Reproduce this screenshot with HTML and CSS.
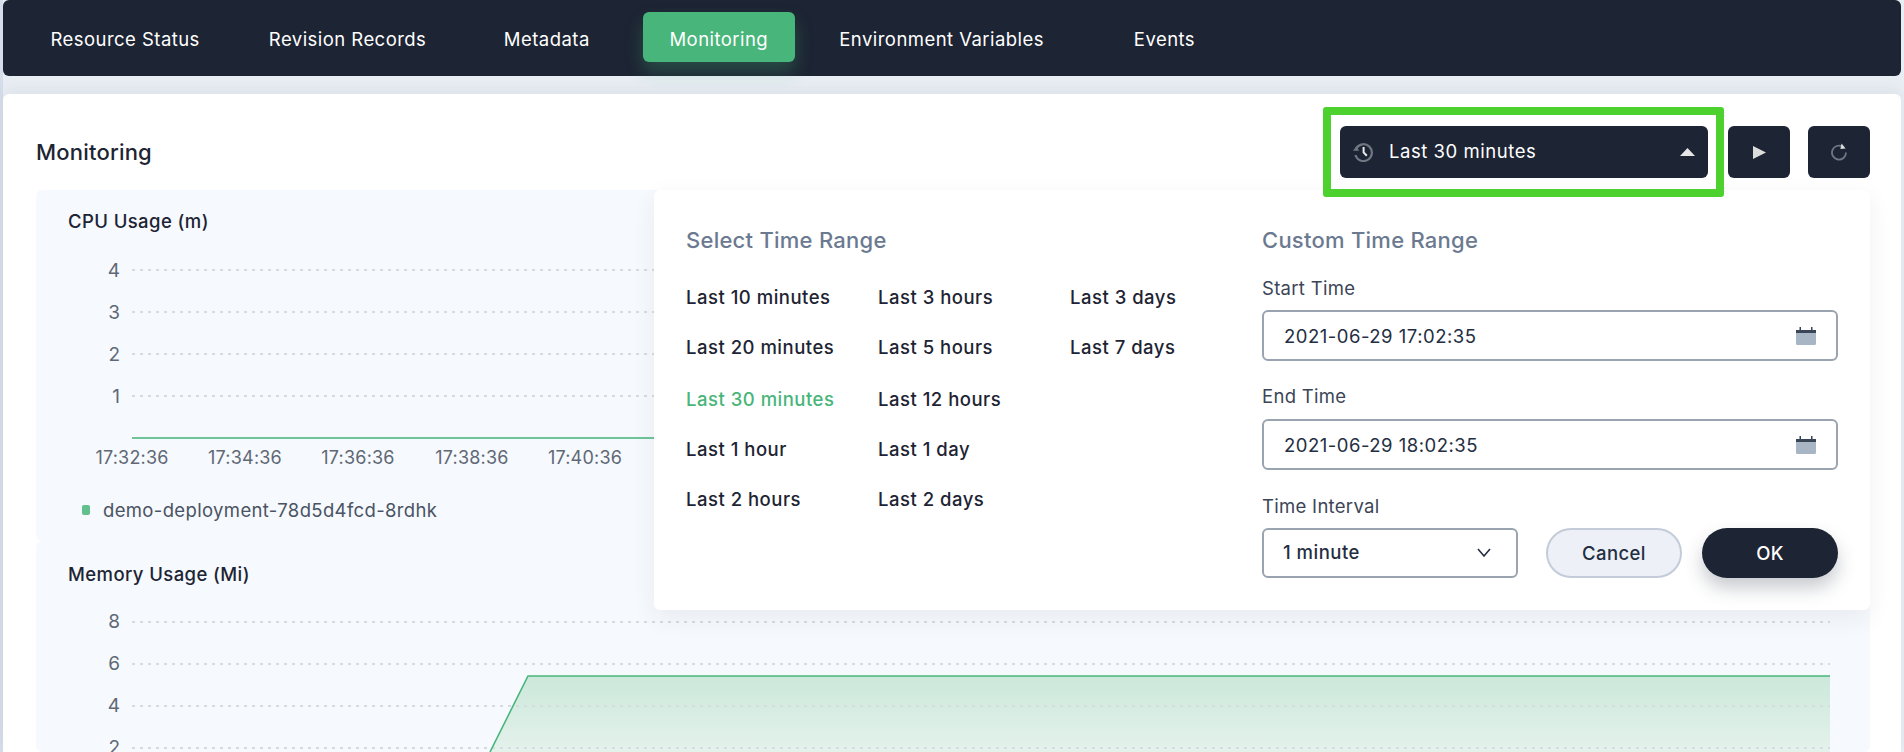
FILE: index.html
```html
<!DOCTYPE html>
<html lang="en">
<head>
<meta charset="utf-8">
<title>Monitoring</title>
<link rel="stylesheet" href="styles.css">
</head>
<body>
<div class="page">
  <nav class="tabs">
    <a class="tab">Resource Status</a>
    <a class="tab">Revision Records</a>
    <a class="tab">Metadata</a>
    <a class="tab tab-active">Monitoring</a>
    <a class="tab">Environment Variables</a>
    <a class="tab">Events</a>
  </nav>
  <main class="panel">
    <header class="panel-head">
      <h1 class="panel-title">Monitoring</h1>
      <div class="controls">
        <button class="range-btn">
          <svg class="history-icon" viewBox="0 0 20 20" width="20" height="20"><path d="M3.2 6.4A8.4 8.4 0 1 1 2.4 13" fill="none" stroke="#6f7782" stroke-width="2.2"/><path d="M0 8.800h6.200L3.200 4.600z" fill="#6f7782"/><path d="M10.600 5v5.400l3.200 3.400" fill="none" stroke="#ececec" stroke-width="2"/></svg>
          <span class="range-label">Last 30 minutes</span>
          <svg class="caret" viewBox="0 0 15 8" width="15" height="8"><path d="M7.5 0L15 8H0z" fill="#e6e6e6"/></svg>
        </button>
        <button class="icon-btn play-btn"><svg viewBox="0 0 13 13" width="13" height="13"><path d="M0 0L13 6.5L0 13z" fill="#dcdcdc"/></svg></button>
        <button class="icon-btn"><svg viewBox="0 0 18 18" width="18" height="18"><path d="M12.6 3.600A7 7 0 1 0 16 9.600" fill="none" stroke="#6f7782" stroke-width="1.800"/><path d="M11.600 0.600L15.600 5.600L10.400 6z" fill="#dcdcdc"/></svg></button>
      </div>
    </header>

    <section class="card card-cpu">
      <h2 class="card-title">CPU Usage (m)</h2>
      <svg class="chart chart-cpu" viewBox="0 0 1830 230" width="1830" height="230">
        <g class="grid">
          <line x1="132" x2="1830" y1="40" y2="40"/>
          <line x1="132" x2="1830" y1="82" y2="82"/>
          <line x1="132" x2="1830" y1="124" y2="124"/>
          <line x1="132" x2="1830" y1="166" y2="166"/>
        </g>
        <g class="axis-y">
          <text x="120" y="47">4</text>
          <text x="120" y="89">3</text>
          <text x="120" y="131">2</text>
          <text x="120" y="173">1</text>
        </g>
        <line class="flat-line" x1="132" x2="1830" y1="208" y2="208"/>
        <g class="axis-x">
          <text x="132" y="234">17:32:36</text>
          <text x="245" y="234">17:34:36</text>
          <text x="358" y="234">17:36:36</text>
          <text x="472" y="234">17:38:36</text>
          <text x="585" y="234">17:40:36</text>
        </g>
      </svg>
      <div class="legend"><i class="legend-dot"></i><span>demo-deployment-78d5d4fcd-8rdhk</span></div>
    </section>

    <section class="card card-mem">
      <h2 class="card-title card-title-mem">Memory Usage (Mi)</h2>
      <svg class="chart chart-mem" viewBox="0 0 1830 130" width="1830" height="130">
        <defs>
          <linearGradient id="memfill" x1="0" y1="0" x2="0" y2="1">
            <stop offset="0" stop-color="#cce8da"/>
            <stop offset="1" stop-color="#e4f2ec"/>
          </linearGradient>
        </defs>
        <path d="M490 130L528 54H1830V130z" fill="url(#memfill)"/>
        <g class="grid">
          <line x1="132" x2="1830" y1="0" y2="0"/>
          <line x1="132" x2="1830" y1="42" y2="42"/>
          <line x1="132" x2="1830" y1="84" y2="84"/>
          <line x1="132" x2="1830" y1="126" y2="126"/>
        </g>
        <path d="M490 130L528 54H1830" fill="none" stroke="#48b57a" stroke-width="1.600"/>
      </svg>
      <div class="mem-y">
        <span>8</span><span>6</span><span>4</span><span>2</span>
      </div>
    </section>

    <div class="popover">
      <div class="pop-left">
        <h3 class="pop-title">Select Time Range</h3>
        <div class="preset-grid">
          <a class="preset">Last 10 minutes</a><a class="preset">Last 3 hours</a><a class="preset">Last 3 days</a>
          <a class="preset">Last 20 minutes</a><a class="preset">Last 5 hours</a><a class="preset">Last 7 days</a>
          <a class="preset preset-active">Last 30 minutes</a><a class="preset">Last 12 hours</a><span></span>
          <a class="preset">Last 1 hour</a><a class="preset">Last 1 day</a><span></span>
          <a class="preset">Last 2 hours</a><a class="preset">Last 2 days</a><span></span>
        </div>
      </div>
      <div class="pop-right">
        <h3 class="pop-title">Custom Time Range</h3>
        <label class="field-label">Start Time</label>
        <div class="input">
          <span>2021-06-29 17:02:35</span>
          <svg viewBox="0 0 20 18" width="20" height="18"><path d="M0 6h20v10.5a1.5 1.5 0 0 1-1.5 1.5h-17A1.5 1.5 0 0 1 0 16.500z" fill="#a8b5c4"/><path d="M0 6V3h3.500V0h1.500v3h10V0h1.500v3H20v3z" fill="#3a4658"/></svg>
        </div>
        <label class="field-label field-label-end">End Time</label>
        <div class="input">
          <span>2021-06-29 18:02:35</span>
          <svg viewBox="0 0 20 18" width="20" height="18"><path d="M0 6h20v10.5a1.5 1.5 0 0 1-1.5 1.5h-17A1.5 1.500 0 0 1 0 16.500z" fill="#a8b5c4"/><path d="M0 6V3h3.500V0h1.500v3h10V0h1.500v3H20v3z" fill="#3a4658"/></svg>
        </div>
        <label class="field-label field-label-int">Time Interval</label>
        <div class="action-row">
          <div class="select">
            <span>1 minute</span>
            <svg viewBox="0 0 14 9" width="14" height="9"><path d="M1 1l6 7l6-7" fill="none" stroke="#242e42" stroke-width="1.600"/></svg>
          </div>
          <button class="btn btn-cancel">Cancel</button>
          <button class="btn btn-ok">OK</button>
        </div>
      </div>
    </div>

    <div class="highlight"></div>
  </main>
</div>
</body>
</html>
```
FILE: styles.css
```css
* { box-sizing: border-box; }
html, body { margin: 0; height: 100%; overflow: hidden; }
body {
  background: linear-gradient(to right, #d5deea 3px, #e9eef4 3px);
  font-family: Inter, "Noto Sans", "Liberation Sans", sans-serif;
  color: #1d2433;
}
.page { padding: 0 3px; height: 752px; display: flex; flex-direction: column; overflow: hidden; }
.tabs {
  height: 76px;
  flex: none;
  background: #1d2433;
  border-radius: 6px;
  display: flex;
  gap: 20px;
  padding: 12px 0 0 23px;
  align-items: flex-start;
  position: relative;
  z-index: 1;
}
.tab {
  min-width: 152px;
  height: 50px;
  padding: 4px 24.5px 0;
  display: flex;
  align-items: center;
  justify-content: center;
  color: #fff;
  font-size: 18.5px;
  font-weight: 400;
  letter-spacing: .45px;
  border-radius: 6px;
}
.tab-active {
  background: #48b57a;
  box-shadow: 0 10px 18px rgba(72, 181, 122, .28);
}
.panel {
  position: relative;
  margin-top: 18px;
  flex: 1;
  min-height: 0;
  background: #fff;
  border-radius: 6px 6px 0 0;
  padding: 0 31px 0 33px;
  box-shadow: 0 -4px 14px rgba(120, 135, 150, .12);
}
.panel-head {
  height: 96px;
  display: flex;
  align-items: flex-start;
  justify-content: space-between;
}
.panel-title { margin: 46px 0 0 0; font-size: 22px; line-height: 24px; font-weight: 500; letter-spacing: .2px; }
.controls { display: flex; gap: 18px; padding-top: 32px; }
.range-btn {
  width: 368px;
  height: 52px;
  margin-right: 2px;
  background: #1d2433;
  border: 0;
  border-radius: 6px;
  color: #fff;
  font: 400 18.5px Inter, sans-serif;
  letter-spacing: .55px;
  display: flex;
  align-items: center;
  padding: 0 13px;
}
.range-label { margin-left: 16px; padding-bottom: 2px; flex: 1; text-align: left; }
.icon-btn {
  width: 62px;
  height: 52px;
  background: #1d2433;
  border: 0;
  border-radius: 6px;
  display: flex;
  align-items: center;
  justify-content: center;
  padding: 0;
}
.card {
  background: #f6f9fd;
  border-radius: 6px;
  position: relative;
}
.card-cpu { height: 351px; }
.card-mem { height: 211px; overflow: hidden; }
.card-title {
  margin: 0;
  padding: 19px 0 0 32px;
  font-size: 18.5px;
  line-height: 24px;
  font-weight: 500;
  letter-spacing: .4px;
}
.card-title-mem { padding-top: 21px; }
.chart { display: block; overflow: visible; margin-left: -36px; }
.chart-cpu { margin-top: -3px; }
.chart-mem { margin-top: 36px; }
.grid line { stroke: #d6dbe0; stroke-width: 2; stroke-dasharray: 3 5; }
.flat-line { stroke: #6fc49a; stroke-width: 2; }
.axis-y text { font: 400 19px Inter, sans-serif; fill: #606875; text-anchor: end; }
.axis-x text { font: 400 18px Inter, sans-serif; fill: #606875; text-anchor: middle; letter-spacing: .2px; }
.legend {
  display: flex;
  align-items: center;
  gap: 13px;
  font-size: 18.5px;
  letter-spacing: .35px;
  color: #4a5363;
  position: absolute;
  top: 309px;
  left: 46px;
}
.legend-dot { width: 8px; height: 10px; background: #62c08c; border-radius: 2px; }
.mem-y {
  position: absolute;
  left: 0;
  top: 60px;
  width: 84px;
  display: flex;
  flex-direction: column;
  align-items: flex-end;
  font-size: 19px;
  color: #606875;
  line-height: 42px;
}
.popover {
  position: absolute;
  left: 651px;
  top: 96px;
  width: 1216px;
  height: 420px;
  background: #fff;
  border-radius: 6px;
  box-shadow: 0 8px 24px rgba(36, 46, 66, .07);
  display: flex;
  padding: 0 32px;
}
.pop-left { width: 576px; }
.pop-right { flex: 1; }
.pop-title {
  margin: 37px 0 0;
  font-size: 22px;
  line-height: 26px;
  font-weight: 500;
  letter-spacing: .25px;
  color: #6b7a90;
}
.preset-grid {
  display: grid;
  grid-template-columns: 192px 192px 192px;
  grid-template-rows: 50px 52px 50px 50px 50px;
  margin-top: 19px;
}
.preset { font-size: 18.5px; font-weight: 500; line-height: 50px; letter-spacing: .5px; color: #1d2433; }
.preset-active { color: #48b57a; }
.field-label { display: block; font-size: 18.5px; line-height: 24px; letter-spacing: .3px; color: #3b4557; margin-top: 23px; }
.field-label-end { margin-top: 23px; margin-bottom: 11px; }
.field-label-int { margin-top: 24px; }
.input {
  margin-top: 10px;
  height: 51px;
  border: 2px solid #99a4b0;
  border-radius: 6px;
  display: flex;
  align-items: center;
  justify-content: space-between;
  padding: 0 20px;
  font-size: 18.5px;
  letter-spacing: .5px;
  color: #242e42;
}
.field-label-end + .input { margin-top: 11px; }
.action-row { display: flex; align-items: flex-start; margin-top: 10px; }
.select {
  width: 256px;
  height: 50px;
  border: 2px solid #99a4b0;
  border-radius: 6px;
  display: flex;
  align-items: center;
  justify-content: space-between;
  padding: 0 25px 2px 19px;
  font-size: 18.5px;
  letter-spacing: .5px;
  color: #242e42;
  font-weight: 500;
}
.btn {
  height: 50px;
  border-radius: 25px;
  font: 500 18.5px Inter, sans-serif;
  letter-spacing: .4px;
}
.btn-cancel {
  width: 136px;
  margin-left: 28px;
  background: #edf1f7;
  border: 2px solid #c3ccd8;
  color: #242e42;
}
.btn-ok {
  width: 136px;
  margin-left: 20px;
  background: #1d2433;
  border: 0;
  color: #fff;
  box-shadow: 0 10px 18px rgba(36, 46, 66, .25);
}
.highlight {
  position: absolute;
  left: 1320px;
  top: 13px;
  width: 401px;
  height: 90px;
  border: 8px solid #4cd12f;
  border-radius: 3px;
  pointer-events: none;
}
```
